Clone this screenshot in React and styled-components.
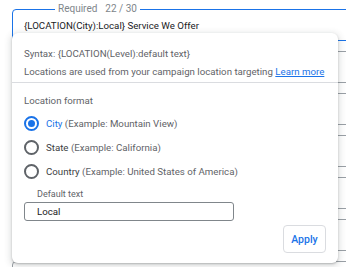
import React from 'react'
import styled, { createGlobalStyle } from 'styled-components'

const GlobalStyle = createGlobalStyle`
    html, body {
        margin: 0;
        padding: 0;
        background: #fff;
        overflow: hidden;
        font-family: Roboto, "Liberation Sans", Arial, sans-serif;
    }
`

const Page = styled.div`
    position: relative;
    width: 346px;
    height: 267px;
    overflow: hidden;
`

const FieldList = styled.div`
    display: flex;
    flex-direction: column;
    gap: 10px;
    padding: 3px 0 0 12px;
    width: 420px;
`

const ActiveField = styled.fieldset`
    margin: 0;
    padding: 4px 11px 8px;
    height: 38px;
    box-sizing: border-box;
    border: 1px solid #1a73e8;
    border-radius: 4px;
`

const Legend = styled.legend`
    margin-left: 31px;
    padding: 0 3px;
    font-size: 10px;
    color: #80868b;
    line-height: 12px;
`

const Count = styled.span`
    margin-left: 8px;
`

const FieldValue = styled.div`
    font-size: 9.7px;
    color: #202124;
    line-height: 14px;
`

const Field = styled.div`
    height: 32px;
    box-sizing: border-box;
    border: 1px solid #9aa0a6;
    border-radius: 4px;
`

const Popup = styled.div`
    position: absolute;
    top: 33px;
    left: 12px;
    width: 326px;
    height: 230px;
    box-sizing: border-box;
    background: #fff;
    border-radius: 6px;
    box-shadow: 0 1px 2px rgba(60, 64, 67, 0.3), 0 2px 6px 2px rgba(60, 64, 67, 0.15);
    display: flex;
    flex-direction: column;
    color: #5f6368;
`

const Intro = styled.div`
    padding: 14px 12px 4px;
    display: flex;
    flex-direction: column;
    gap: 5px;
    font-size: 9.7px;
    line-height: 13px;
    white-space: nowrap;
    border-bottom: 1px solid #dadce0;
`

const Link = styled.a`
    color: #1a73e8;
    text-decoration: underline;
`

const Body = styled.div`
    padding: 11px 12px 0;
    display: flex;
    flex-direction: column;
`

const SectionTitle = styled.div`
    font-size: 9.7px;
    line-height: 13px;
    margin-bottom: 9px;
`

const Options = styled.div`
    display: flex;
    flex-direction: column;
    gap: 9px;
`

const Option = styled.label`
    display: flex;
    align-items: center;
    gap: 7px;
    font-size: 9.7px;
    line-height: 15px;
    color: #5f6368;
`

const Radio = styled.span`
    width: 15px;
    height: 15px;
    box-sizing: border-box;
    border-radius: 50%;
    border: 2px solid ${p => (p.checked ? '#1a73e8' : '#5f6368')};
    display: flex;
    align-items: center;
    justify-content: center;

    &::after {
        content: '';
        width: 7px;
        height: 7px;
        border-radius: 50%;
        background: ${p => (p.checked ? '#1a73e8' : 'transparent')};
    }
`

const OptionName = styled.span`
    color: ${p => (p.active ? '#1a73e8' : '#3c4043')};
`

const Hint = styled.span`
    color: #5f6368;
`

const InputLabel = styled.div`
    font-size: 9px;
    line-height: 11px;
    color: #5f6368;
    margin: 10px 0 2px 13px;
`

const TextBox = styled.div`
    width: 210px;
    height: 19px;
    box-sizing: border-box;
    border: 1px solid #80868b;
    border-radius: 3px;
    padding-left: 12px;
    font-size: 9.7px;
    line-height: 17px;
    color: #202124;
`

const Footer = styled.div`
    display: flex;
    justify-content: flex-end;
    padding: 4px 12px 0;
`

const ApplyButton = styled.button`
    width: 43px;
    height: 28px;
    padding: 0;
    background: #fff;
    border: 1px solid #dadce0;
    border-radius: 4px;
    color: #1a73e8;
    font-family: Roboto, "Liberation Sans", Arial, sans-serif;
    font-size: 10.5px;
    font-weight: 500;
`

const options = [
    { name: 'City', hint: '(Example: Mountain View)', checked: true },
    { name: 'State', hint: '(Example: California)' },
    { name: 'Country', hint: '(Example: United States of America)' },
]

const App = () => {
    return (
        <Page>
            <GlobalStyle />
            <FieldList>
                <ActiveField>
                    <Legend>
                        Required<Count>22 / 30</Count>
                    </Legend>
                    <FieldValue>{'{LOCATION(City):Local} Service We Offer'}</FieldValue>
                </ActiveField>
                <Field />
                <Field />
                <Field />
                <Field />
                <Field />
                <Field />
            </FieldList>
            <Popup>
                <Intro>
                    <div>{'Syntax: {LOCATION(Level):default text}'}</div>
                    <div>
                        Locations are used from your campaign location targeting <Link>Learn more</Link>
                    </div>
                </Intro>
                <Body>
                    <SectionTitle>Location format</SectionTitle>
                    <Options>
                        {options.map(o => (
                            <Option key={o.name}>
                                <Radio checked={o.checked} />
                                <span>
                                    <OptionName active={o.checked}>{o.name}</OptionName> <Hint>{o.hint}</Hint>
                                </span>
                            </Option>
                        ))}
                    </Options>
                    <InputLabel>Default text</InputLabel>
                    <TextBox>Local</TextBox>
                </Body>
                <Footer>
                    <ApplyButton>Apply</ApplyButton>
                </Footer>
            </Popup>
        </Page>
    )
}

export default App
